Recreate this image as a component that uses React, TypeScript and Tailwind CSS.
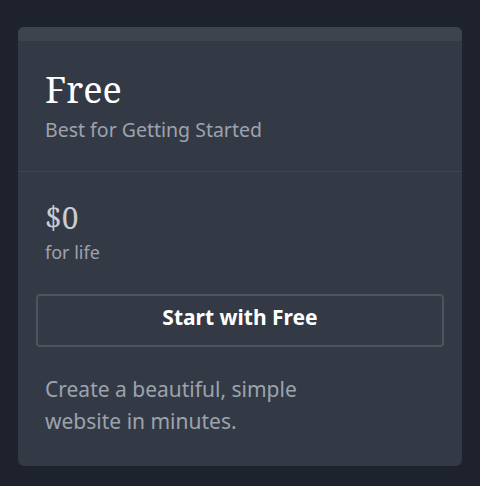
import React from 'react';

const serif = { fontFamily: '"Noto Serif", "DejaVu Serif", serif' };

const App: React.FC = () => {
  return (
    <div
      className="min-h-[486px] w-full bg-[#1e222d] px-[18px] pt-[27px] pb-5"
      style={{ fontFamily: '"Noto Sans", "Open Sans", sans-serif' }}
    >
      <div className="overflow-hidden rounded-md bg-[#343a45]">
        {/* top strip */}
        <div className="h-[14px] bg-[#3e444d]" />

        {/* plan name */}
        <div className="border-b border-[#3e444d] px-[27px] pt-[29px] pb-[27px]">
          <h2 className="text-4xl leading-10 text-white" style={serif}>
            Free
          </h2>
          <p className="mt-1.5 text-[19.5px] leading-7 text-[#9ca3af]">Best for Getting Started</p>
        </div>

        {/* price */}
        <div className="px-[27px] pt-[28px]">
          <div className="text-3xl leading-9 text-[#c9cdd3]" style={serif}>
            $0
          </div>
          <p className="mt-0.5 text-lg text-[#9ca3af]">for life</p>
        </div>

        <div className="px-[18px] pt-[28px]">
          <button
            type="button"
            className="flex h-[53px] w-full items-center justify-center rounded border-2 border-[#4d545e] pb-1.5 text-[21px] font-bold text-white"
          >
            Start with Free
          </button>
        </div>

        <p className="max-w-xs px-[27px] pt-[26px] pb-[29px] text-[21px] leading-8 text-[#9ca3af]">
          Create a beautiful, simple website in minutes.
        </p>
      </div>
    </div>
  );
};

export default App;
